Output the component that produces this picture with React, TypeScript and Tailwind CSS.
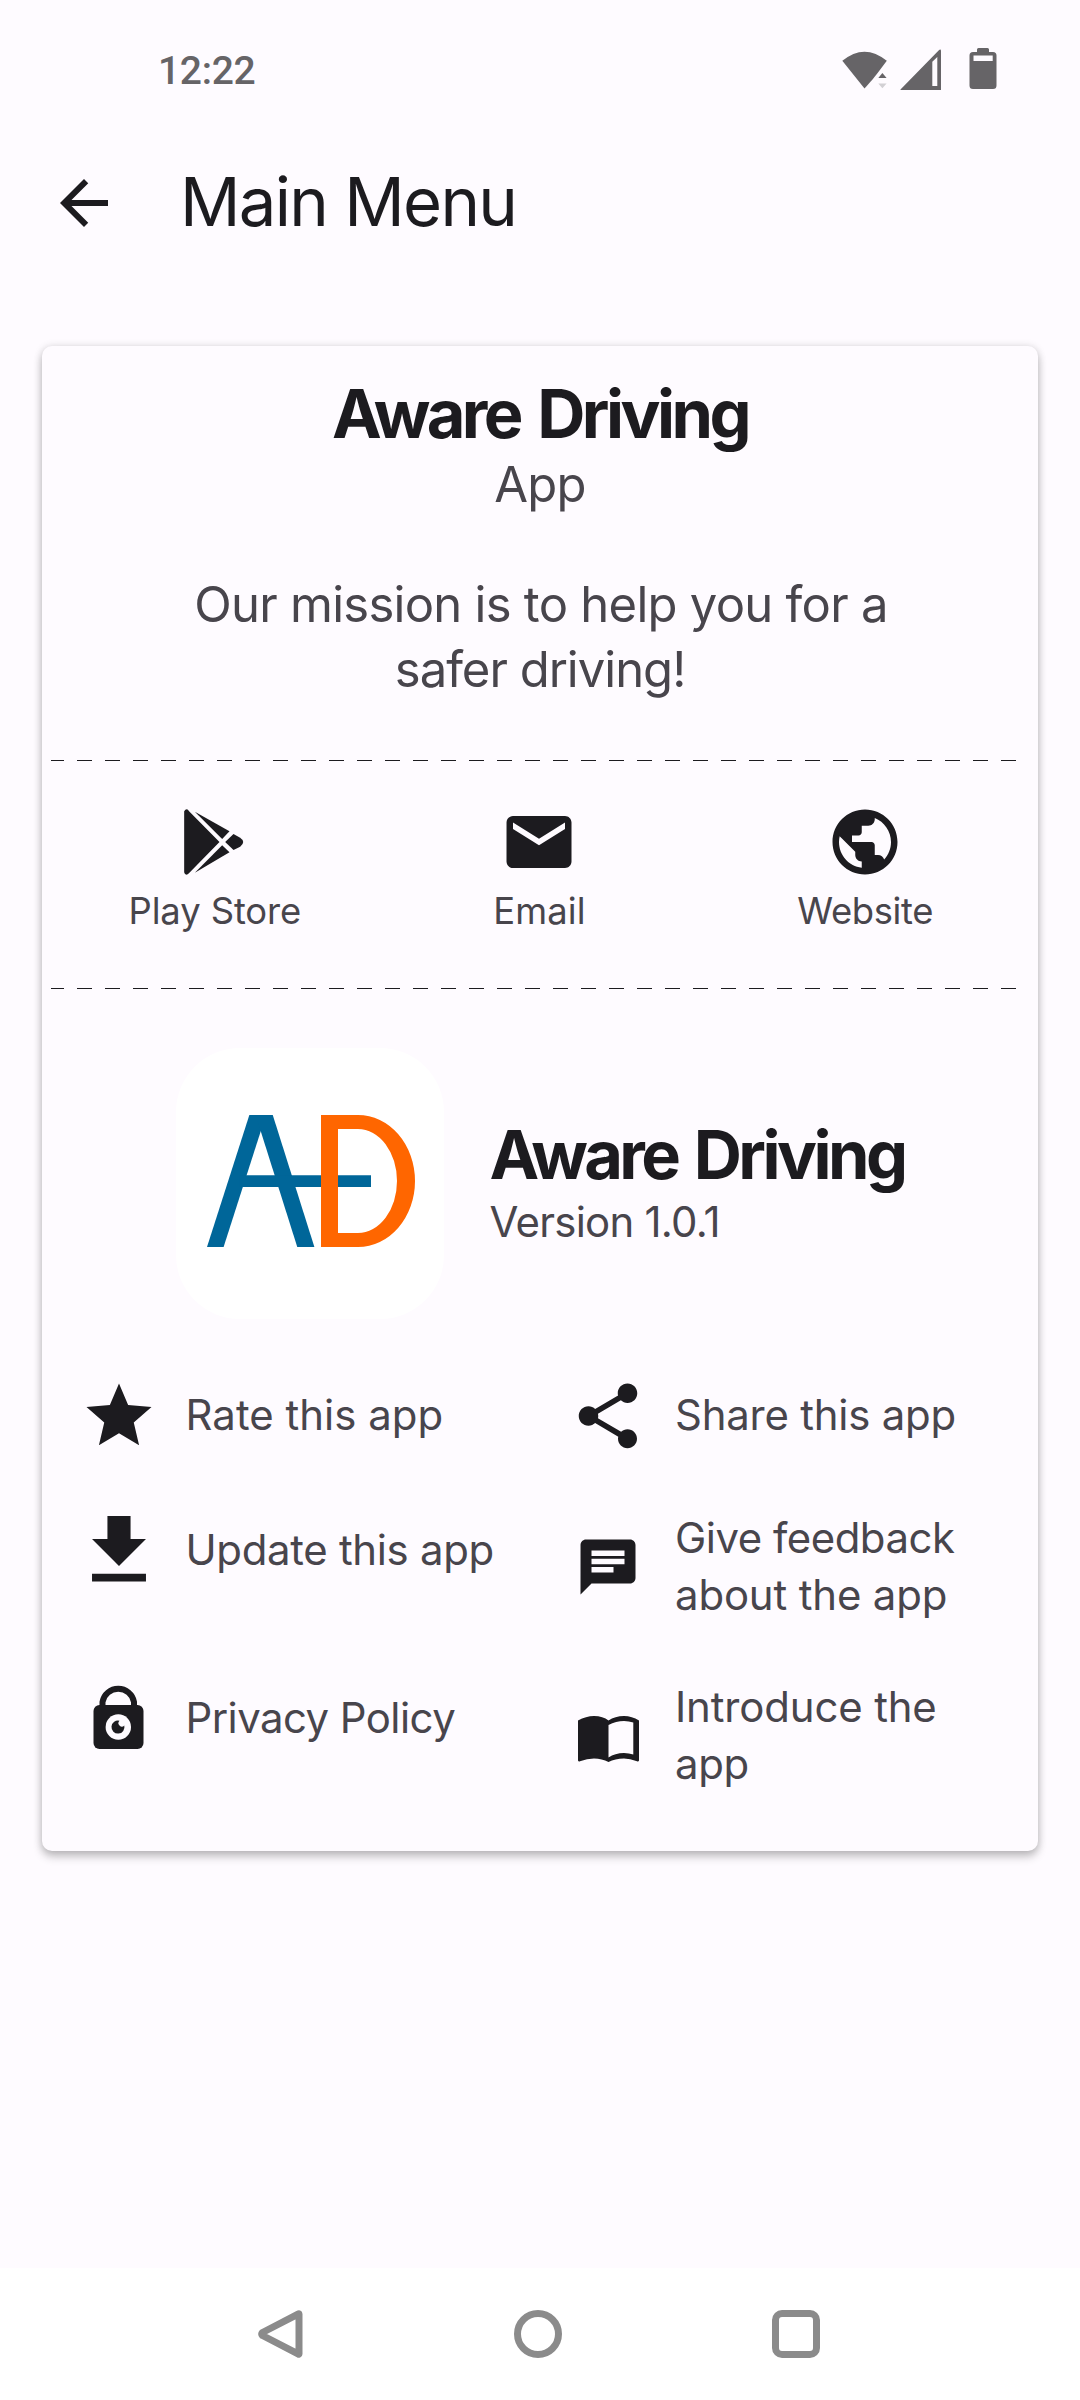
import type { ReactNode } from 'react';
import { MdArrowBack, MdChat, MdEmail, MdPublic, MdShare, MdStar } from 'react-icons/md';

function StatusBar() {
  return (
    <div className="flex h-[140px] shrink-0 items-center pl-[158px] text-[#666467]">
      <span className="w-[684px] pt-[2px] font-['Roboto',sans-serif] text-[39px] leading-[48px] font-medium tracking-[-0.3px]">12:22</span>
      <svg viewBox="0 0 45 38" className="mt-[-1px] h-[38px] w-[45px]">
        <path d="M0.3 9.8 Q22.5 -8.5 44.8 9.8 L36 21.4 L30.5 28.5 L22.5 37.6 Z" fill="currentColor" />
        <path d="M36.3 27L40.4 22L44.6 27Z" fill="currentColor" />
        <path d="M36.3 32.5H44.6L40.4 37.3Z" fill="#d2d0d4" />
      </svg>
      <svg viewBox="0 0 42 42" className="ml-[13px] h-[42px] w-[42px]">
        <path fillRule="evenodd" d="M0.5 40.5 L38.6 1.4 Q41 -0.5 41 2 V41 H1.5 Q0 41 0.5 40.5Z M32.3 12.8 L37.3 8 V37 H32.3Z" fill="currentColor" />
      </svg>
      <svg viewBox="0 0 28 42" className="mt-[-2px] ml-[27px] h-[42px] w-[28px]">
        <path fillRule="evenodd" d="M9.5 0H18.5Q20 0 20 1.5V4H24Q27.5 4 27.5 7.5V37.5Q27.5 41 24 41H4Q0.5 41 0.5 37.5V7.5Q0.5 4 4 4H8V1.5Q8 0 9.5 0ZM4.5 7.5V13H23.7V7.5Z" fill="currentColor" />
      </svg>
    </div>
  );
}

function PlayStoreIcon() {
  return (
    <svg viewBox="464.5 190 234 234" className="size-[78px]" fill="#1c1b1f">
      <path d="M492 215Q495 209 500 209Q504 210 506 214L598 307L507 400Q503 405 498 405Q493 403 492 398Z" />
      <path d="M524 216L628 275L606 298Z" />
      <path d="M524 399L628 338L606 317Z" />
      <path d="M640 283L660 294Q669 300 669 307Q669 315 660 321L640 331L615 307Z" />
    </svg>
  );
}

function LockIcon() {
  return (
    <svg viewBox="0 0 51 66" className="mb-[4px] h-[66px] w-[51px]">
      <path d="M9.5 24V19A16 16 0 0 1 41 19V24" fill="none" stroke="#1c1b1f" strokeWidth="6" />
      <rect x="0.5" y="22" width="50" height="44" rx="6" fill="#1c1b1f" />
      <circle cx="25.3" cy="44" r="12.7" fill="#fefbff" />
      <path d="M26.5 37.8A6.5 6.5 0 1 0 31.3 42.6A3.3 3.3 0 0 1 26.5 37.8Z" fill="#1c1b1f" />
    </svg>
  );
}

function BookIcon() {
  return (
    <svg viewBox="0 0 61 46" className="mt-[6px] h-[46px] w-[61px]">
      <path fillRule="evenodd" d="M0 4.5Q8 0 16 0Q25 0 30.5 4.5Q37 0 46 0Q54 0 61 4.5V44.5Q60.5 45.8 59 45.2Q52 42.5 46 42.5Q37 42.5 30.5 46Q24 42.5 16 42.5Q9 42.5 2 45.2Q0.5 45.8 0 44.5ZM30.5 9V41.5Q37 37 46 37Q51 37 55.3 38.5V6.5Q51 5 46 5Q38 5 30.5 9Z" fill="#1c1b1f" />
    </svg>
  );
}

function DownloadIcon() {
  return (
    <svg viewBox="5 3 14 17" className="h-[65.5px] w-[54px]" fill="#1c1b1f">
      <path d="M19 9h-4V3H9v6H5l7 7 7-7zM5 18v2h14v-2H5z" />
    </svg>
  );
}

function DashedLine() {
  return (
    <div className="ml-[9px] h-px w-[965px] bg-[repeating-linear-gradient(90deg,#1c1b1f_0_13px,transparent_13px_26px,#1c1b1f_26px_28px)]" />
  );
}

function Logo() {
  return (
    <div className="relative h-[271px] w-[268px] rounded-[64px] bg-white">
      <svg viewBox="169 284 494 396" className="absolute top-[67px] left-[31px] h-[132px] w-[164.7px]" fill="none" stroke="#006699">
        <path d="M188.7 696L326.1 268" strokeWidth="47.5" />
        <path d="M470.5 696L335.5 268" strokeWidth="49" />
        <path d="M266 482.5H662" strokeWidth="35" />
      </svg>
      <div className="absolute top-[67px] left-[145px] h-[132px] w-[94.5px] rounded-r-[57px_66px] border-y-[14px] border-r-[18.5px] border-l-[17px] border-[#ff6600]" />
    </div>
  );
}

function LinkItem({ icon, children }: { icon: ReactNode; children: ReactNode }) {
  return (
    <div className="flex flex-col items-center gap-2 text-[#1c1b1f]">
      {icon}
      <div className="text-[36.4px] leading-[44px] text-[#48454c]">{children}</div>
    </div>
  );
}

function MenuItem({ icon, children }: { icon: ReactNode; children: ReactNode }) {
  return (
    <div className="flex min-h-[78px] items-center gap-[28px] self-start text-[#1c1b1f]">
      <div className="flex size-[78px] shrink-0 items-center justify-center">{icon}</div>
      <div className="-my-px pb-[2px] text-[41.9px] leading-[57px] whitespace-nowrap text-[#48454c]">{children}</div>
    </div>
  );
}

export default function App() {
  return (
    <div className="flex h-[2400px] w-[1080px] flex-col overflow-hidden bg-[#fefbff] font-['Inter',sans-serif] text-[#1c1b1f]">
      <StatusBar />
      <header className="flex h-[126px] shrink-0 items-center gap-[60px] pl-12">
        <MdArrowBack className="size-[72px]" />
        <h1 className="pb-[2px] text-[67px] leading-[80px] tracking-[-1.7px]">Main Menu</h1>
      </header>

      <main className="flex-1 px-[42px] pt-20">
        <section className="h-[1505px] w-[996px] rounded-[10px] bg-[#fefbff] pt-[29px] shadow-[0_6px_10px_rgba(0,0,0,0.2),0_1px_9px_rgba(0,0,0,0.16)]">
          <div className="text-center">
            <h2 className="text-[66.7px] leading-[77px] font-bold tracking-[-3.55px] [word-spacing:5px]">Aware Driving</h2>
            <p className="text-[49px] leading-[65px] tracking-[-0.82px] text-[#48454c]">App</p>
            <p className="mt-[55px] text-[49px] leading-[65px] text-[#48454c]">
              <span className="pl-[2px] tracking-[-0.74px]">Our mission is to help you for a</span>
              <br />
              <span className="tracking-[-1px]">safer driving!</span>
            </p>
          </div>

          <div className="mt-[58px]"><DashedLine /></div>
          <div className="ml-[9px] grid h-[227px] w-[977px] grid-cols-3 pt-[42px]">
            <LinkItem icon={<PlayStoreIcon />}><span className="pl-[2px] tracking-[-0.1px]">Play Store</span></LinkItem>
            <LinkItem icon={<MdEmail className="size-[78px]" />}><span className="tracking-[0.1px]">Email</span></LinkItem>
            <LinkItem icon={<MdPublic className="size-[78px]" />}><span className="tracking-[-0.38px]">Website</span></LinkItem>
          </div>
          <DashedLine />

          <div className="mt-[59px] flex items-center gap-[46px] pl-[133.5px]">
            <Logo />
            <div className="pb-px">
              <h2 className="text-[66.7px] leading-[77px] font-bold tracking-[-3.55px] [word-spacing:4px]">Aware Driving</h2>
              <p className="text-[41.9px] leading-[57px] tracking-[-0.73px] text-[#48454c]">Version 1.0.1</p>
            </div>
          </div>

          <div className="mt-[58px] grid grid-cols-[489.5px_1fr] gap-y-[55px] pl-[37.5px]">
            <MenuItem icon={<MdStar className="size-[78px]" />}><span className="relative -top-px tracking-[0.05px]">Rate this app</span></MenuItem>
            <MenuItem icon={<MdShare className="size-[78px]" />}><span className="relative -top-px tracking-[-0.2px]">Share this app</span></MenuItem>
            <MenuItem icon={<DownloadIcon />}><span className="relative top-px tracking-[-0.3px]">Update this app</span></MenuItem>
            <MenuItem icon={<MdChat className="size-[66px]" />}>
              <span className="tracking-[-0.47px]">Give feedback</span>
              <br />
              <span className="tracking-[-0.14px]">about the app</span>
            </MenuItem>
            <MenuItem icon={<LockIcon />}><span className="tracking-[-0.54px]">Privacy Policy</span></MenuItem>
            <MenuItem icon={<BookIcon />}>
              <span className="tracking-[-0.13px]">Introduce the</span>
              <br />
              <span className="tracking-[-0.31px]">app</span>
            </MenuItem>
          </div>
        </section>
      </main>

      <nav className="grid h-[132px] shrink-0 grid-cols-[repeat(3,258px)] place-items-center bg-white pl-[151px]">
        <svg viewBox="-1.5 0 48 48" className="size-12" fill="none" stroke="#8b8b8b" strokeWidth="7" strokeLinejoin="round">
          <path d="M41.5 4V44Q41.5 44.5 41 44.2L5 25.5Q3.6 24 5 22.5L41 3.8Q41.5 3.5 41.5 4Z" />
        </svg>
        <div className="size-12 rounded-full border-[7px] border-[#8b8b8b]" />
        <div className="size-12 rounded-[10px] border-[7px] border-[#8b8b8b]" />
      </nav>
    </div>
  );
}
